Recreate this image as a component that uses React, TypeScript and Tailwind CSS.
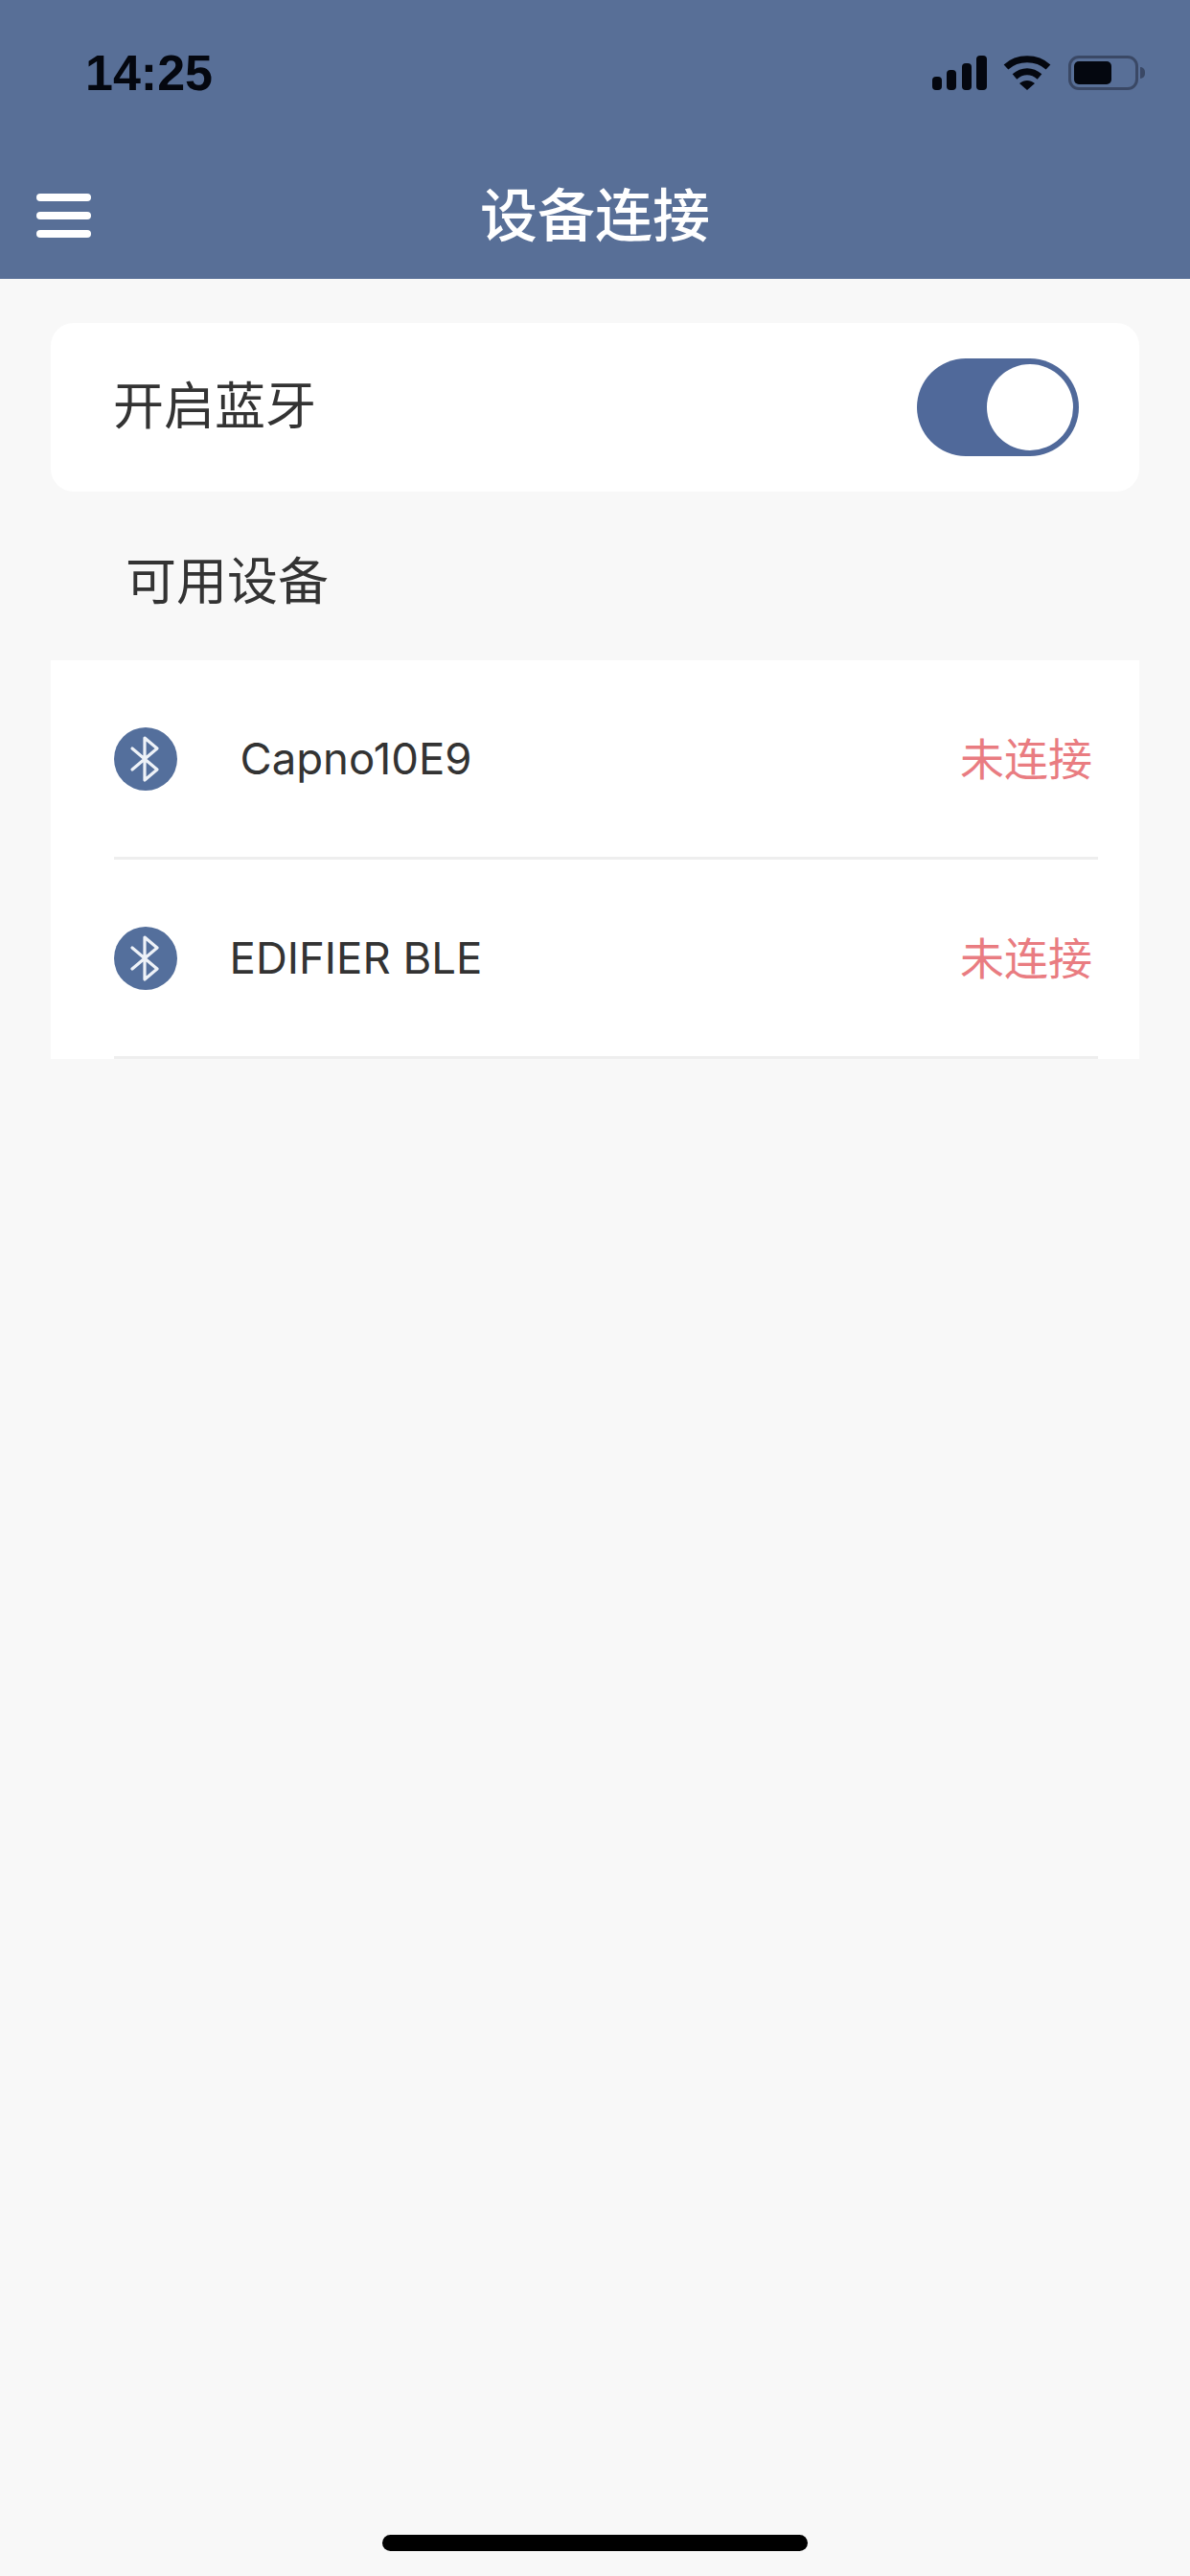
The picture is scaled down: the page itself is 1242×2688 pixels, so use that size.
const devices = ["Capno10E9", "EDIFIER BLE"];

const cjk = "font-['Inter','Noto_Sans_CJK_SC',sans-serif]";

const SignalIcon = () => (
  <svg width="58" height="36" viewBox="0 0 58 36" fill="#04070f">
    <rect x="0" y="22" width="10" height="14" rx="4" />
    <rect x="15" y="15" width="10" height="21" rx="4" />
    <rect x="31" y="8" width="10" height="28" rx="4" />
    <rect x="46" y="0" width="11" height="36" rx="4" />
  </svg>
);

const WifiIcon = () => (
  <svg width="50" height="36" viewBox="0 0 50 36" fill="none" stroke="#04070f" strokeWidth="7">
    <path d="M3 12C15 1 35 1 47 12" />
    <path d="M12 22C20 15 30 15 38 22" />
    <path d="M17 29C22 25 28 25 33 29L25 36Z" fill="#04070f" stroke="none" />
  </svg>
);

const BatteryIcon = () => (
  <div className="flex items-center gap-[2px]">
    <div className="w-[73px] h-[36px] rounded-[11px] border-[3px] border-[#3a4865] p-[3px] flex">
      <div className="w-[39px] h-full rounded-[5px] bg-[#04070f]" />
    </div>
    <div className="w-[5px] h-[12px] rounded-r-full bg-[#3a4865]" />
  </div>
);

const BluetoothIcon = () => (
  <div className="w-[66px] h-[66px] rounded-full bg-[#546f9c] flex items-center justify-center shrink-0">
    <svg width="66" height="66" viewBox="0 0 66 66" fill="none" stroke="#eef2f8" strokeWidth="3.2" strokeLinejoin="round" strokeLinecap="round">
      <path d="M19 22L45 44L32 55V11L45 22L19 44" />
    </svg>
  </div>
);

const App = () => {
  return (
    <div className={`min-h-[2688px] flex flex-col bg-[#f8f8f8] ${cjk}`}>
      <header className="h-[291px] bg-[#586f97]">
        <div className="h-[152px] pl-[89px] pr-[47px] flex items-center justify-between">
          <span className="font-['Liberation_Sans',sans-serif] font-bold text-[52px] leading-none text-[#04070f]">
            14:25
          </span>
          <div className="flex items-center">
            <SignalIcon />
            <div className="ml-[16px]">
              <WifiIcon />
            </div>
            <div className="ml-[18px]">
              <BatteryIcon />
            </div>
          </div>
        </div>
        <div className="h-[139px] pt-[7px] px-[38px] grid grid-cols-[1fr_auto_1fr] items-center">
          <div className="w-[57px] flex flex-col gap-[11px]">
            <div className="h-[8px] rounded-full bg-white" />
            <div className="h-[8px] rounded-full bg-white" />
            <div className="h-[8px] rounded-full bg-white" />
          </div>
          <h1 className="text-[60px] leading-none font-medium text-white">设备连接</h1>
        </div>
      </header>

      <main className="pt-[46px] pl-[53px] pr-[53px]">
        <div className="h-[176px] rounded-[24px] bg-white pl-[65px] pr-[63px] flex items-center justify-between">
          <span className="text-[53px] text-[#333333]">开启蓝牙</span>
          <div className="w-[169px] h-[102px] rounded-full bg-[#50699a] p-[6px] flex justify-end">
            <div className="w-[90px] h-[90px] rounded-full bg-white" />
          </div>
        </div>

        <div className="h-[176px] pt-[13px] pl-[78px] flex items-center">
          <span className="text-[53px] text-[#333333]">可用设备</span>
        </div>

        <div className="bg-white pl-[66px] pr-[43px]">
          {devices.map((device) => (
            <div key={device} className="h-[208px] border-b-[3px] border-[#eeeeee] flex items-center">
              <BluetoothIcon />
              <span className="w-[373px] pt-[1px] text-center text-[45.5px] text-[#333333]">{device}</span>
              <span className="ml-auto pr-[6px] pt-[1px] text-[46px] text-[#e97c81]">未连接</span>
            </div>
          ))}
        </div>
      </main>

      <div className="mt-auto pb-[26px] flex justify-center">
        <div className="w-[444px] h-[17px] rounded-full bg-black" />
      </div>
    </div>
  );
};

export default App;
